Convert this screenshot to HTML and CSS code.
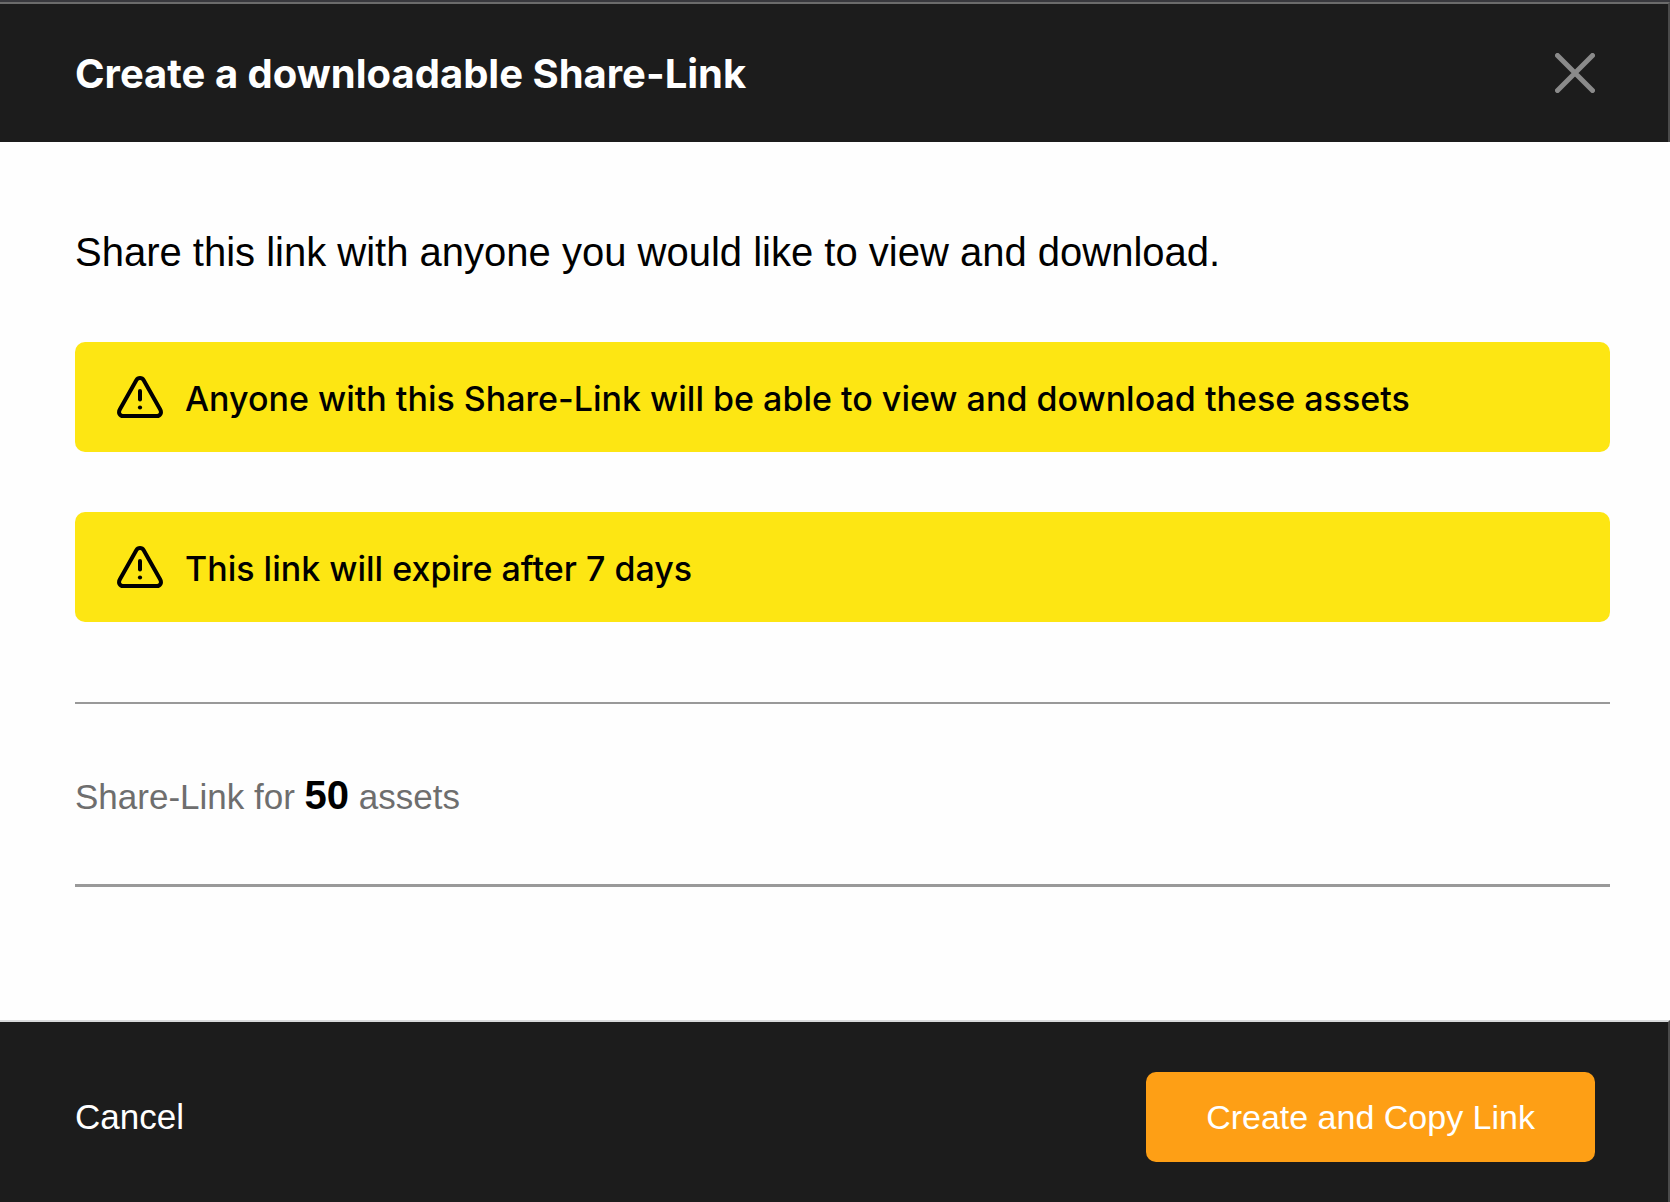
FILE: index.html
```html
<!DOCTYPE html>
<html lang="en">
<head>
    <meta charset="UTF-8">
    <meta name="viewport" content="width=device-width, initial-scale=1.0">
    <title>Create a downloadable Share-Link</title>
    <link rel="stylesheet" href="styles.css">
</head>
<body>
    <div class="modal" role="dialog" aria-labelledby="modal-title">
        <header class="modal-header">
            <h1 id="modal-title">Create a downloadable Share-Link</h1>
            <button type="button" class="close" aria-label="Close">
                <svg width="40" height="40" viewBox="0 0 40 40" fill="none" stroke="#8a8a8a" stroke-width="5" stroke-linecap="round">
                    <path d="M2.5 2.5l35 35M37.5 2.5l-35 35"/>
                </svg>
            </button>
        </header>

        <main class="modal-body">
            <p class="intro">Share this link with anyone you would like to view and download.</p>

            <div class="alert">
                <svg width="46" height="42" viewBox="0 0 46 42" fill="none" stroke="#000" stroke-width="4" stroke-linecap="round" stroke-linejoin="round">
                    <path d="M19.3 4.2 2.8 33.6C1 36.8 2.8 40 6 40H40C43.2 40 45 36.8 43.2 33.6L26.7 4.2C25 1.3 21 1.3 19.3 4.2Z"/>
                    <path d="M23 15v8.5"/>
                    <circle cx="23" cy="31.5" r="2.1" fill="#000" stroke="none"/>
                </svg>
                <span>Anyone with this Share-Link will be able to view and download these assets</span>
            </div>

            <div class="alert">
                <svg width="46" height="42" viewBox="0 0 46 42" fill="none" stroke="#000" stroke-width="4" stroke-linecap="round" stroke-linejoin="round">
                    <path d="M19.3 4.2 2.8 33.6C1 36.8 2.8 40 6 40H40C43.2 40 45 36.8 43.2 33.6L26.7 4.2C25 1.3 21 1.3 19.3 4.2Z"/>
                    <path d="M23 15v8.5"/>
                    <circle cx="23" cy="31.5" r="2.1" fill="#000" stroke="none"/>
                </svg>
                <span>This link will expire after 7 days</span>
            </div>

            <p class="summary">Share-Link for <strong>50</strong> assets</p>
        </main>

        <footer class="modal-footer">
            <button type="button" class="cancel">Cancel</button>
            <button type="button" class="create">Create and Copy Link</button>
        </footer>
    </div>
</body>
</html>
```
FILE: styles.css
```css
* {
    box-sizing: border-box;
}
body {
    margin: 0;
    font-family: "Liberation Sans", Arial, sans-serif;
    color: #000;
    background-color: #fefefe;
}
.modal {
    display: flex;
    flex-direction: column;
    min-height: 100vh;
    border-top: 2px solid #38383d;
}
.modal-header,
.modal-footer {
    display: flex;
    align-items: center;
    justify-content: space-between;
    padding: 0 73px 0 75px;
    background-color: #1c1c1c;
    border-right: 2px solid #4a4a4a;
}
.modal-header {
    height: 140px;
    border-top: 2px solid #6b6b6b;
}
h1 {
    margin: 0;
    padding-top: 2px;
    font-family: Inter, sans-serif;
    font-size: 40px;
    font-weight: 700;
    line-height: 48px;
    color: #fff;
}
button {
    border: 0;
    padding: 0;
    background: none;
    font-family: inherit;
    font-size: 35px;
    color: #fff;
    cursor: pointer;
}
.close svg {
    display: block;
}
.modal-body {
    flex: 1;
    padding: 86px 60px 0 75px;
}
.intro {
    margin: 0 0 66px;
    font-size: 40px;
    line-height: 48px;
}
.alert {
    display: flex;
    align-items: center;
    gap: 22px;
    height: 110px;
    margin-bottom: 60px;
    padding: 0 42px;
    border-radius: 10px;
    background-color: #fde613;
    font-family: Inter, sans-serif;
    font-size: 34px;
    font-weight: 500;
}
.alert span {
    padding-top: 3px;
}
.summary {
    margin: 80px 0 0;
    padding: 69px 0 63px;
    border-top: 2px solid #999;
    border-bottom: 3px solid #999;
    font-size: 35px;
    line-height: 48px;
    color: #6e6e6e;
}
.summary strong {
    font-size: 40px;
    line-height: 40px;
    color: #000;
}
.modal-footer {
    height: 182px;
    padding-top: 10px;
    border-top: 2px solid #d8dadb;
}
.create {
    height: 90px;
    padding: 0 60px;
    border-radius: 10px;
    background-color: #fe9f15;
    font-size: 34px;
}
```
